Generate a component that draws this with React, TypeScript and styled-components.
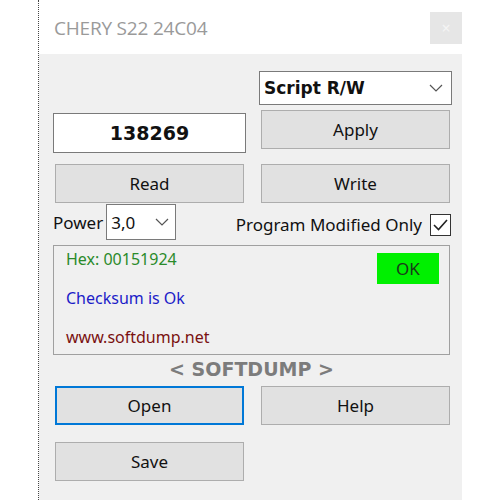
import React from "react";
import styled, { createGlobalStyle } from "styled-components";

const GlobalStyle = createGlobalStyle`
  html, body {
    margin: 0;
    padding: 0;
    background: #ffffff;
  }
  body {
    font-family: "Noto Sans", "Open Sans", "Liberation Sans", sans-serif;
  }
`;

const Chevron = () => (
  <svg width="14" height="8" viewBox="0 0 14 8">
    <polyline points="1,1 7,7 13,1" fill="none" stroke="#555" strokeWidth="1.2" />
  </svg>
);

export default function App() {
  return (
    <>
      <GlobalStyle />
      <Window>
        <TitleBar>
          <Title>CHERY S22 24C04</Title>
          <CloseBox>×</CloseBox>
        </TitleBar>
        <Body>
          <Grid>
            <Spacer />
            <Select $bold $height={34}>
              <span>Script R/W</span>
              <Chevron />
            </Select>

            <TextBox>138269</TextBox>
            <Button $top={-2}>Apply</Button>
          </Grid>

          <Grid $mt={11}>
            <Button>Read</Button>
            <Button>Write</Button>
          </Grid>

          <OptionsRow>
            <PowerGroup>
              <Label>Power</Label>
              <PowerSelect>
                <span>3,0</span>
                <Chevron />
              </PowerSelect>
            </PowerGroup>
            <CheckGroup>
              <Label>Program Modified Only</Label>
              <CheckBox>
                <svg width="17" height="14" viewBox="0 0 17 14">
                  <polyline points="2,7 6.5,11.5 15,2" fill="none" stroke="#222" strokeWidth="1.6" />
                </svg>
              </CheckBox>
            </CheckGroup>
          </OptionsRow>

          <StatusBox>
            <StatusLines>
              <StatusText $color="#2a8a2a">Hex: 00151924</StatusText>
              <StatusText $color="#1c1cc8">Checksum is Ok</StatusText>
              <StatusText $color="#7a1010">www.softdump.net</StatusText>
            </StatusLines>
            <OkBadge>OK</OkBadge>
          </StatusBox>

          <Brand>&lt; SOFTDUMP &gt;</Brand>

          <Grid $mt={6}>
            <Button $focused>Open</Button>
            <Button>Help</Button>
          </Grid>
          <Grid $mt={17}>
            <Button>Save</Button>
          </Grid>
        </Body>
      </Window>
    </>
  );
}

const Window = styled.div`
  margin-left: 38px;
  width: 424px;
  height: 500px;
  display: flex;
  flex-direction: column;
  border-left: 1px dotted #444;
  box-sizing: border-box;
`;

const TitleBar = styled.div`
  height: 52px;
  margin-top: 2px;
  background: #ffffff;
  display: flex;
  align-items: center;
  justify-content: space-between;
  padding-left: 15px;
`;

const Title = styled.div`
  font-family: "Open Sans", "Noto Sans", sans-serif;
  font-size: 19px;
  color: #9a9a9a;
  letter-spacing: -0.2px;
`;

const CloseBox = styled.div`
  width: 32px;
  height: 32px;
  background: #e6e6e6;
  color: #f4f4f4;
  font-size: 16px;
  display: flex;
  align-items: center;
  justify-content: center;
`;

const Body = styled.div`
  flex: 1;
  background: #f0f0f0;
  padding: 17px 0 0 14px;
`;

const Grid = styled.div<{ $mt?: number }>`
  display: grid;
  grid-template-columns: 193px 193px;
  column-gap: 13px;
  row-gap: 7px;
  align-items: start;
  margin-top: ${(p) => p.$mt ?? 0}px;
`;

const Spacer = styled.div``;

const Select = styled.div<{ $bold?: boolean; $height: number }>`
  height: ${(p) => p.$height}px;
  box-sizing: border-box;
  background: #ffffff;
  border: 1px solid #7a7a7a;
  display: flex;
  align-items: center;
  justify-content: space-between;
  padding: 0 8px 0 5px;
  font-size: 17px;
  color: #111;
  ${(p) =>
    p.$bold &&
    `
    font-family: "DejaVu Sans", Verdana, sans-serif;
    font-weight: 700;
    padding-left: 4px;
  `}
`;

const TextBox = styled.div`
  height: 40px;
  margin-top: 1px;
  box-sizing: border-box;
  background: #ffffff;
  border: 1px solid #7a7a7a;
  display: flex;
  align-items: center;
  justify-content: center;
  font-family: "DejaVu Sans", Verdana, sans-serif;
  font-size: 19px;
  font-weight: 700;
  color: #111;
`;

const Button = styled.div<{ $focused?: boolean; $top?: number }>`
  height: 39px;
  margin: ${(p) => p.$top ?? 0}px 2px 0 2px;
  box-sizing: border-box;
  background: #e1e1e1;
  border: ${(p) => (p.$focused ? "2px solid #0078d7" : "1px solid #adadad")};
  display: flex;
  align-items: center;
  justify-content: center;
  font-size: 17px;
  color: #111;
`;

const OptionsRow = styled.div`
  display: flex;
  justify-content: space-between;
  align-items: flex-end;
  width: 398px;
  margin-top: 1px;
`;

const PowerGroup = styled.div`
  display: flex;
  align-items: center;
  gap: 3px;
`;

const Label = styled.span`
  font-size: 17px;
  color: #111;
`;

const PowerSelect = styled(Select).attrs({ $height: 36 })`
  width: 70px;
  padding: 0 6px 0 4px;
`;

const CheckGroup = styled.div`
  display: flex;
  align-items: center;
  gap: 8px;
  margin-bottom: 4px;
`;

const CheckBox = styled.div`
  width: 21px;
  height: 22px;
  box-sizing: border-box;
  border: 1.5px solid #333;
  background: #ffffff;
  display: flex;
  align-items: center;
  justify-content: center;
`;

const StatusBox = styled.div`
  width: 397px;
  height: 110px;
  margin-top: 5px;
  box-sizing: border-box;
  border: 1px solid #a0a0a0;
  display: flex;
  justify-content: space-between;
  padding: 1px 10px 0 12px;
`;

const StatusLines = styled.div`
  display: flex;
  flex-direction: column;
  gap: 14px;
`;

const StatusText = styled.span<{ $color: string }>`
  font-size: 16px;
  line-height: 25px;
  color: ${(p) => p.$color};
`;

const OkBadge = styled.div`
  width: 62px;
  height: 31px;
  margin-top: 6px;
  background: #00f000;
  display: flex;
  align-items: center;
  justify-content: center;
  font-size: 17px;
  color: #1a3a1a;
`;

const Brand = styled.div`
  width: 397px;
  text-align: center;
  margin-top: 3px;
  font-family: "DejaVu Sans", Verdana, sans-serif;
  font-weight: 700;
  font-size: 19px;
  color: #7c7c7c;
  line-height: 22px;
`;
